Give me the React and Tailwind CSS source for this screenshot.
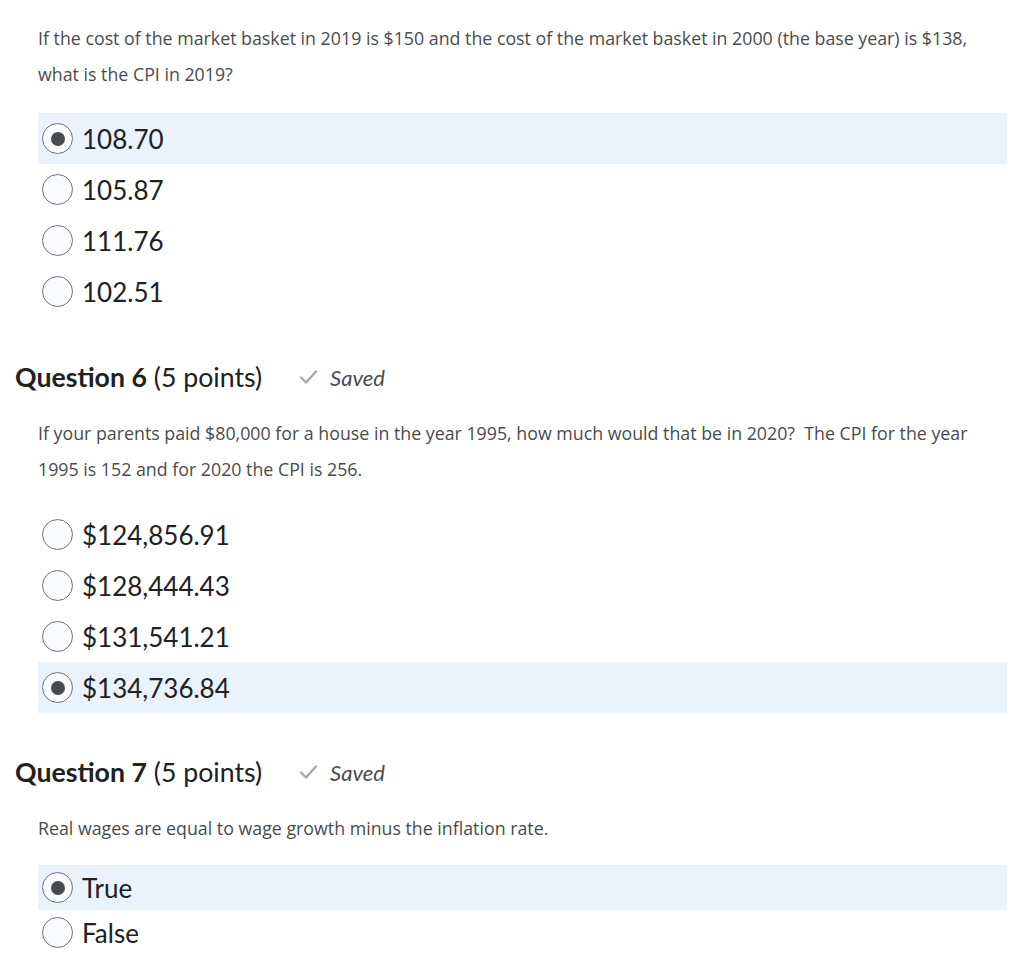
import React from 'react';

const bodyFont = { fontFamily: '"Open Sans", "Noto Sans", sans-serif' };

const Radio = ({ checked }) => (
    <span className="flex h-[31px] w-[31px] shrink-0 items-center justify-center rounded-full border border-[#6e7376] bg-[#f9fbff]">
        {checked && <span className="h-[14px] w-[14px] rounded-full bg-[#494c4e]" />}
    </span>
);

const Option = ({ label, checked, tall = true }) => (
    <div className={`flex items-center gap-[9px] pl-[4px] ${tall ? 'h-[51px]' : 'h-[45px]'} ${checked ? 'bg-[#eaf2fc]' : ''}`}>
        <Radio checked={checked} />
        <span className="font-['Lato'] text-[26px] leading-none text-[#202122]">{label}</span>
    </div>
);

const Heading = ({ number }) => (
    <div className="flex h-[40px] items-center pl-[15px] font-['Lato']">
        <h2 className="text-[26.7px] text-[#202122]">
            <span className="font-bold">Question {number}</span> (5 points)
        </h2>
        <span className="ml-[37px] flex items-center text-[22px] italic text-[#494c4e]">
            <svg width="19" height="16" viewBox="0 0 19 16" className="mr-[12px]">
                <polyline points="2,8.5 7,13.5 17,2.5" fill="none" stroke="#a5aaae" strokeWidth="2.4" strokeLinecap="round" strokeLinejoin="round" />
            </svg>
            Saved
        </span>
    </div>
);

const QuestionText = ({ children, className = '' }) => (
    <p className={`pl-[38px] pr-[46px] text-[17.8px] leading-[36px] text-[#494c4e] ${className}`} style={bodyFont}>
        {children}
    </p>
);

export default function App() {
    return (
        <div className="min-h-[962px] w-[1024px] bg-white">
            <QuestionText className="pt-[20px]">
                If the cost of the market basket in 2019 is $150 and the cost of the market basket in 2000 (the base year) is $138,
                what is the CPI in 2019?
            </QuestionText>

            <div className="ml-[38px] mr-[17px] mt-[21px]">
                <Option label="108.70" checked />
                <Option label="105.87" />
                <Option label="111.76" />
                <Option label="102.51" />
            </div>

            <div className="mt-[40px]">
                <Heading number={6} />
            </div>

            <QuestionText className="mt-[18px]">
                If your parents paid $80,000 for a house in the year 1995, how much would that be in 2020?&nbsp; The CPI for the year
                1995 is 152 and for 2020 the CPI is 256.
            </QuestionText>

            <div className="ml-[38px] mr-[17px] mt-[22px]">
                <Option label="$124,856.91" />
                <Option label="$128,444.43" />
                <Option label="$131,541.21" />
                <Option label="$134,736.84" checked />
            </div>

            <div className="mt-[39px]">
                <Heading number={7} />
            </div>

            <QuestionText className="mt-[18px]">
                Real wages are equal to wage growth minus the inflation rate.
            </QuestionText>

            <div className="ml-[38px] mr-[17px] mt-[19px]">
                <Option label="True" checked tall={false} />
                <Option label="False" tall={false} />
            </div>
        </div>
    );
}
